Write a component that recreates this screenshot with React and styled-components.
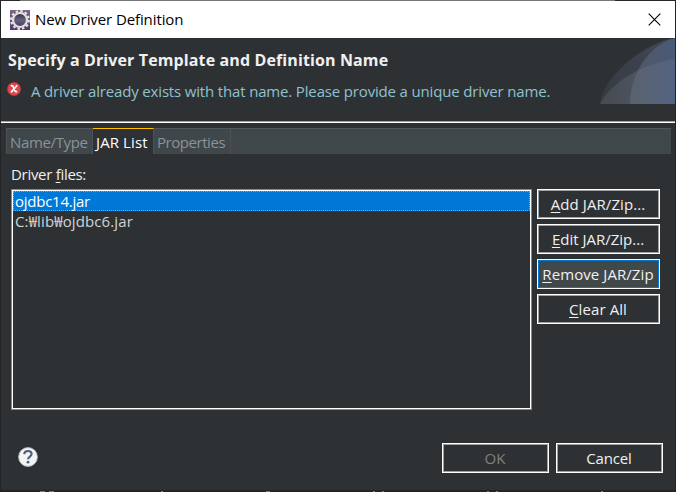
import React from 'react';
import styled, { createGlobalStyle, css } from 'styled-components';

const GlobalStyle = createGlobalStyle`
  * { box-sizing: border-box; }
  body { margin: 0; overflow: hidden; background: #26282a; }
`;

const Desktop = styled.div`
  width: 676px;
  height: 492px;
  padding: 1px 1px 0;
  background: linear-gradient(90deg, #2b282b 20px, #77767a 20px, #77767a 615px, #29272a 615px) 0 0 / 100% 1px no-repeat, #222426;
  font: 15px/20px 'Open Sans', 'Noto Sans CJK KR', sans-serif;
  color: #f0f0f0;
`;

const Dialog = styled.main`
  width: 674px;
  height: 489px;
  display: flex;
  flex-direction: column;
  background: #2d3134;
`;

const Label = styled.span`
  white-space: pre;
  letter-spacing: ${(p) => p.$track || 0}px;
`;

const TitleBar = styled.header`
  height: 37px;
  flex: none;
  display: flex;
  align-items: center;
  padding: 0 14px 0 9px;
  background: #fff;
  color: #000;
  svg { display: block; }
`;

const TitleText = styled(Label)`
  flex: 1;
  margin: -2px 0 0 5px;
`;

const CloseButton = styled.button`
  padding: 0;
  border: 0;
  margin-top: -1px;
  background: none;
`;

const Banner = styled.section`
  height: 83px;
  flex: none;
  display: flex;
  justify-content: space-between;
`;

const BannerText = styled.div`
  padding: 12px 0 0 6px;
`;

const Heading = styled.h1`
  margin: 0 0 0 1px;
  font-size: 16px;
  line-height: 20px;
  font-weight: 700;
`;

const Message = styled.div`
  display: flex;
  gap: 10px;
  margin-top: 11px;
  color: #8fc1cf;
  svg { display: block; margin-top: 1px; }
`;

const Separator = styled.div`
  height: 2px;
  flex: none;
  background: #fff;
  border-top: 1px solid #a0a0a0;
`;

const TabBar = styled.nav`
  height: 26px;
  flex: none;
  display: flex;
  margin: 5px 4px 0 5px;
  background: #3f474b;
  border-top: 1px solid #50585c;
  border-left: 1px solid #4b5357;
`;

const Tab = styled.div`
  width: ${(p) => p.$width}px;
  height: 26px;
  margin-top: -1px;
  padding: 3px 0 0 3px;
  color: #8c9296;
  border-top: 1px solid #50585c;
  border-right: 1px solid #4b5357;
  ${(p) => p.$active && css`
    color: #fff;
    background: #2d3134;
    border-top-color: #ffc000;
  `}
`;

const ListLabel = styled.div`
  flex: none;
  height: 35px;
  padding: 10px 0 0 10px;
`;

const Panel = styled.section`
  flex: none;
  display: flex;
  gap: 5px;
  padding-left: 10px;
`;

const FileList = styled.div`
  width: 521px;
  height: 221px;
  border: 1px solid #828790;
  box-shadow: inset 0 0 0 1px #fff;
  padding: 1px;
`;

const FileRow = styled.div`
  height: 20px;
  padding-left: 1px;
  line-height: 19px;
  color: #d2d2d2;
  border: 1px dotted transparent;
  ${(p) => p.$selected && css`
    color: #fff;
    background: #0078d7;
    border-color: #ff8728;
  `}
`;

const Actions = styled.div`
  display: flex;
  flex-direction: column;
  gap: 5px;
`;

const Button = styled.button`
  width: ${(p) => p.$width}px;
  height: 30px;
  padding: 0 1px 0 0;
  font: inherit;
  text-align: center;
  color: ${(p) => (p.disabled ? '#808080' : '#f0f0f0')};
  background: ${(p) => (p.$focused ? '#41484a' : '#2d3134')};
  border: 1px solid #fff;
  box-shadow: inset 0 0 0 1px ${(p) => (p.$focused ? '#0078d7' : '#a0a0a0')};
`;

const Mnemonic = styled.u`
  text-underline-offset: 2px;
  text-decoration-thickness: 1px;
`;

const Footer = styled.footer`
  display: flex;
  align-items: center;
  gap: 7px;
  padding: 0 12px 0 17px;
  height: 30px;
  margin-top: 33px;
`;

const HelpIcon = styled.svg`
  display: block;
  margin: -2px auto 0 0;
`;

const BelowEdge = styled.svg`
  display: block;
`;

function EclipseIcon() {
  return (
    <svg width="20" height="20" viewBox="0 0 20 20">
      <defs>
        <linearGradient id="appBg" x1="0" y1="0" x2="0" y2="1">
          <stop offset="0" stopColor="#77668c" />
          <stop offset="1" stopColor="#513878" />
        </linearGradient>
        <linearGradient id="appCore" x1="0" y1="0" x2="0" y2="1">
          <stop offset="0" stopColor="#2d293d" />
          <stop offset=".5" stopColor="#65617f" />
          <stop offset="1" stopColor="#453c68" />
        </linearGradient>
      </defs>
      <rect width="20" height="20" fill="url(#appBg)" />
      <circle cx="10" cy="10" r="8.9" fill="none" stroke="#eeeae5" strokeWidth="2" strokeDasharray="2.5 2.16" />
      <circle cx="10" cy="10" r="7" fill="url(#appCore)" stroke="#e5e0dc" strokeWidth="2.2" />
    </svg>
  );
}

function CloseIcon() {
  return (
    <svg width="13" height="13" viewBox="0 0 13 13">
      <path d="M.7.7 12.3 12.3M12.3.7.7 12.3" stroke="#000" strokeWidth="1.1" />
    </svg>
  );
}

function ErrorIcon() {
  return (
    <svg width="14" height="14" viewBox="0 0 14 14">
      <circle cx="7" cy="7" r="6.6" fill="#d9484c" stroke="#b8373e" strokeWidth=".7" />
      <path d="M3.8 3.8q1.8-.8 2.6 1.4l1.3 3.2q.7 1.7 2.5 1.2M10.2 3.3 4 10.4" fill="none" stroke="#fff" strokeWidth="1.7" />
    </svg>
  );
}

function BannerArt() {
  return (
    <svg width="75" height="66" viewBox="0 0 75 66">
      <defs>
        <linearGradient id="arcBack">
          <stop offset="0" stopColor="#363b41" />
          <stop offset="1" stopColor="#414958" />
        </linearGradient>
        <linearGradient id="arcFront">
          <stop offset="0" stopColor="#474b4f" />
          <stop offset="1" stopColor="#515c70" />
        </linearGradient>
        <linearGradient id="arcSide">
          <stop offset="0" stopColor="#747c88" stopOpacity=".35" />
          <stop offset="1" stopColor="#526995" stopOpacity=".5" />
        </linearGradient>
      </defs>
      <path d="M0 66C3 38 44 5 75 0V66Z" fill="url(#arcBack)" />
      <path d="M0 66C13 42 43 26 75 21V66Z" fill="url(#arcFront)" />
      <path d="M30 66C30 37 48 7 75 0V66Z" fill="url(#arcSide)" />
    </svg>
  );
}

export default function App() {
  return (
    <Desktop>
      <GlobalStyle />
      <Dialog>
        <TitleBar>
          <EclipseIcon />
          <TitleText $track={-0.1}>New Driver Definition</TitleText>
          <CloseButton aria-label="Close"><CloseIcon /></CloseButton>
        </TitleBar>
        <Banner>
          <BannerText>
            <Heading><Label $track={0.12}>Specify a Driver Template and Definition Name</Label></Heading>
            <Message>
              <ErrorIcon />
              <Label $track={-0.16}>A driver already exists with that name. Please provide a unique driver name.</Label>
            </Message>
          </BannerText>
          <BannerArt />
        </Banner>
        <Separator />
        <TabBar>
          <Tab $width={86}><Label $track={-0.35}>Name/Type</Label></Tab>
          <Tab $width={61} $active><Label $track={0.1}>JAR List</Label></Tab>
          <Tab $width={77}><Label $track={-0.45}>Properties</Label></Tab>
        </TabBar>
        <ListLabel><Label $track={-0.3}>Driver <Mnemonic>f</Mnemonic>iles:</Label></ListLabel>
        <Panel>
          <FileList>
            <FileRow $selected><Label $track={-0.25}>ojdbc14.jar</Label></FileRow>
            <FileRow><Label $track={0.12}>C:₩lib₩ojdbc6.jar</Label></FileRow>
          </FileList>
          <Actions>
            <Button $width={123}><Label $track={0.08}><Mnemonic>A</Mnemonic>dd JAR/Zip...</Label></Button>
            <Button $width={123}><Label><Mnemonic>E</Mnemonic>dit JAR/Zip...</Label></Button>
            <Button $width={123} $focused><Label $track={0.08}><Mnemonic>R</Mnemonic>emove JAR/Zip</Label></Button>
            <Button $width={123}><Label $track={0.1}><Mnemonic>C</Mnemonic>lear All</Label></Button>
          </Actions>
        </Panel>
        <Footer>
          <HelpIcon width="20" height="20" viewBox="0 0 20 20">
            <circle cx="10" cy="10" r="9.4" fill="#f4f4f4" stroke="#b4bdca" strokeWidth=".9" />
            <path d="M6.2 7.2C6.5 3 13.8 3 13.6 7c-.1 2.6-3.5 2.5-3.5 5.3" fill="none" stroke="#4c6082" strokeWidth="2.2" />
            <circle cx="10" cy="15.2" r="1.4" fill="#4c6082" />
          </HelpIcon>
          <Button $width={107} disabled><Label>OK</Label></Button>
          <Button $width={107}><Label $track={-0.15}>Cancel</Label></Button>
        </Footer>
      </Dialog>
      <BelowEdge width="674" height="2" viewBox="0 0 674 2">
        <path d="M39 1.5h5M48 1.5h5M160 1.5h2M265 1.5h4M372 1.5h2M381 1.5h2M486 1.5h2M495 1.5h2M600 1.5h2" stroke="#767778" strokeWidth="1" />
      </BelowEdge>
    </Desktop>
  );
}
